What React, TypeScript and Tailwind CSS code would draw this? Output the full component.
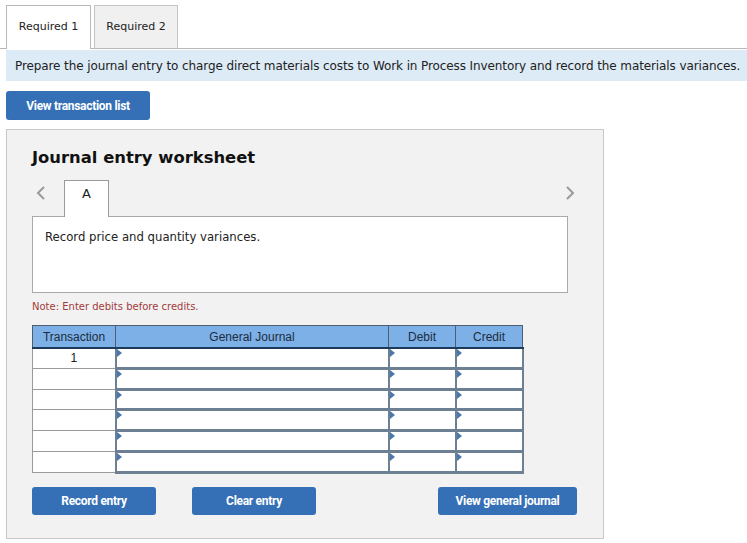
import React from 'react';

const verdana = { fontFamily: '"DejaVu Sans", Verdana, sans-serif' };

const Marker = () => (
  <span className="absolute left-0 top-0 h-0 w-0 border-y-[4px] border-l-[5px] border-y-transparent border-l-[#4a78ab]" />
);

const JournalRow = ({ num }: { num?: string }) => (
  <tr className="h-[20.8px]">
    <td className="border border-[#9a9a9a] bg-white p-0 text-center text-[12px] leading-[16px] text-[#222]">{num}</td>
    <td className="relative border-x-2 border-b-[3px] border-[#6c7f93] bg-white p-0">
      <Marker />
    </td>
    <td className="relative border-x-2 border-b-[3px] border-[#6c7f93] bg-white p-0">
      <Marker />
    </td>
    <td className="relative border-x-2 border-b-[3px] border-[#6c7f93] bg-white p-0">
      <Marker />
    </td>
  </tr>
);

const BlueButton = ({ label, className }: { label: string; className?: string }) => (
  <button
    className={`h-[29px] rounded-[3px] bg-[#3570b7] font-[Roboto,'Liberation_Sans',sans-serif] text-[12px] font-bold tracking-[-0.3px] text-white ${className ?? ''}`}
  >
    {label}
  </button>
);

export default function App() {
  return (
    <div className="h-[543px] w-[747px] overflow-hidden bg-white" style={verdana}>
      {/* tabs */}
      <div className="flex items-end gap-[3px] border-b border-[#b8b8b8] pl-[6px] pt-[5px]">
        <div className="-mb-px flex h-[44px] w-[85px] items-center justify-center border border-b-0 border-[#b8b8b8] bg-white text-[11px] text-[#222]">
          Required 1
        </div>
        <div className="flex h-[43px] w-[84px] items-center justify-center border border-b-0 border-[#c4c4c4] bg-[#f0f0f0] text-[11px] text-[#222]">
          Required 2
        </div>
      </div>

      <div className="ml-[6px] mt-[1px] flex h-[31px] items-center whitespace-nowrap bg-[#ddebf7] pl-[9px] text-[12px] tracking-[-0.1px] text-[#222]">
        Prepare the journal entry to charge direct materials costs to Work in Process Inventory and record the materials variances.
      </div>

      <div className="ml-[6px] mt-[10px]">
        <BlueButton label="View transaction list" className="w-[144px]" />
      </div>

      {/* worksheet */}
      <div className="ml-[6px] mt-[9px] h-[410px] w-[598px] border border-[#c8c8c8] bg-[#f2f2f2] pl-[25px] pt-[17px]">
        <h2 className="text-[16.4px] font-bold leading-[22px] text-[#111]">Journal entry worksheet</h2>

        <div className="mt-[11px] flex w-[536px] items-end">
          <span className="mb-[15px] ml-[3px] w-[29px] text-[#9a9a9a]">
            <svg width="12" height="16" viewBox="0 0 12 16" fill="none" stroke="currentColor" strokeWidth="2">
              <path d="M9 2 L3 8 L9 14" />
            </svg>
          </span>
          <div className="-mb-px z-10 flex h-[37px] w-[45px] items-start justify-center border border-b-0 border-[#9a9a9a] bg-white pt-[3px] text-[13px] text-[#222]">
            A
          </div>
          <span className="mb-[15px] ml-auto mr-[-8px] text-[#9a9a9a]">
            <svg width="12" height="16" viewBox="0 0 12 16" fill="none" stroke="currentColor" strokeWidth="2">
              <path d="M3 2 L9 8 L3 14" />
            </svg>
          </span>
        </div>

        <div className="h-[77px] w-[536px] border border-[#aaaaaa] bg-white pl-[12px] pt-[12px] text-[11.7px] text-[#222]">
          Record price and quantity variances.
        </div>

        <p className="mt-[6px] text-[10px] text-[#a23b3b]">Note: Enter debits before credits.</p>

        <table
          className="mt-[11px] w-[490px] table-fixed border-collapse"
          style={{ fontFamily: '"Liberation Sans", Arial, sans-serif' }}
        >
          <colgroup>
            <col className="w-[83px]" />
            <col className="w-[273px]" />
            <col className="w-[67px]" />
            <col className="w-[67px]" />
          </colgroup>
          <thead>
            <tr className="h-[22px] bg-[#7cb0e6] text-[12px] text-[#1c2c40]">
              <th className="border border-b-2 border-[#4f5f70] border-b-[#1e3a5a] pt-[2px] font-normal">Transaction</th>
              <th className="border border-b-2 border-[#4f5f70] border-b-[#1e3a5a] pt-[2px] font-normal">General Journal</th>
              <th className="border border-b-2 border-[#4f5f70] border-b-[#1e3a5a] pt-[2px] font-normal">Debit</th>
              <th className="border border-b-2 border-[#4f5f70] border-b-[#1e3a5a] pt-[2px] font-normal">Credit</th>
            </tr>
          </thead>
          <tbody>
            <JournalRow num="1" />
            <JournalRow />
            <JournalRow />
            <JournalRow />
            <JournalRow />
            <JournalRow />
          </tbody>
        </table>

        <div className="mt-[13px] flex w-[545px]">
          <BlueButton label="Record entry" className="!h-[28px] w-[124px]" />
          <BlueButton label="Clear entry" className="ml-[36px] !h-[28px] w-[124px]" />
          <BlueButton label="View general journal" className="ml-auto !h-[28px] w-[139px]" />
        </div>
      </div>
    </div>
  );
}
